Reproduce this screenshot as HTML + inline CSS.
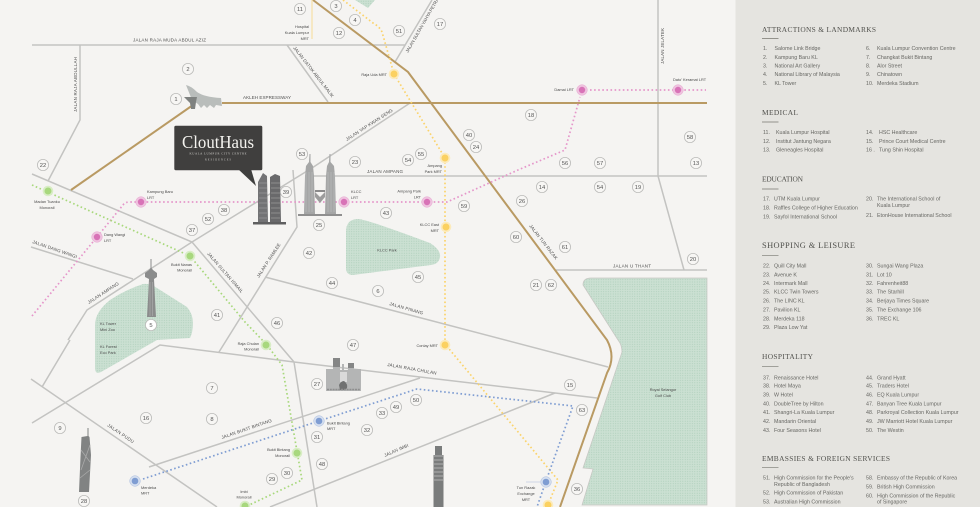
<!DOCTYPE html>
<html lang="en"><head><meta charset="utf-8"><title>CloutHaus Location Map</title>
<style>
html,body{margin:0;padding:0;width:980px;height:507px;overflow:hidden;background:#f5f4f2}
svg{display:block}
.m text{font-family:"Liberation Sans",sans-serif}
.r{fill:none;stroke:#c3c3c1;stroke-width:1.5}
.g{fill:none;stroke:#b99a63;stroke-width:2}
.d{fill:none;stroke-width:1.7;stroke-dasharray:1.6 2.5}
.n circle{fill:#f7f6f4;stroke:#bcbcba;stroke-width:.8;r:5.600px}
.n text{font-size:5.800px;fill:#555;text-anchor:middle}
.l{font-size:3.900px;fill:#4a4a4a}
.rl{font-size:4.500px;fill:#4e4e4e}
.e{text-anchor:end}.c{text-anchor:middle}
.s text{font-family:"Liberation Sans",sans-serif;font-size:5.300px;fill:#676763}
.s .h{font-family:"Liberation Serif",serif;font-size:7.400px;fill:#50504c}
.s line{stroke:#77776f;stroke-width:.7}
</style></head><body>
<svg class="m" width="980" height="507" viewBox="0 0 980 507" xmlns="http://www.w3.org/2000/svg">
<defs><pattern id="p" width="2.400" height="2.400" patternUnits="userSpaceOnUse"><rect width="2.400" height="2.400" fill="#cbe0d2"/><circle cx="1.200" cy="1.200" r=".48" fill="#a4c9b3"/></pattern></defs>
<rect width="980" height="507" fill="#f5f4f2"/>
<!-- parks -->
<path d="M355 0L368 8L375 0Z" fill="url(#p)"/>
<path d="M95 325Q95 312 110 300Q125 290 143 284Q150 283 157 288L187 307Q193 314 193 323Q193 332 190 338L157 340L101 372Q95 375 95 368Z" fill="url(#p)"/>
<path d="M346 232Q346 219 358 219Q366 219 430 243Q441 250 440 257Q439 264 431 265L353 275Q346 275 346 268Z" fill="url(#p)"/>
<path d="M583 285Q583 278 591 278L707 278L707 505L582 505L593 469L583 468L622 352Q622 345 618 340Z" fill="url(#p)" stroke="#c6c6c2" stroke-width=".7"/>
<!-- roads -->
<path class="r" d="M32 45H405M80 45V120L48 181M32 174L192 242L294 362L317 507M68 340L87 310L192 242L312 168L410 103M70 340L42 387M31 379L217 507M31 247L133 279M293 170L297 227L219 352M32 423L160 345L294 362L597 398M265 277L608 367M149 467L420 378M270 507L555 393M305 176H707M658 0V176L684 270M556 270H707M287 45L328 102M395 62L432 0"/>
<!-- gold -->
<path class="g" d="M222 103H707M71 190L193 105M313 0L408 72L607 340Q616 357 607 373L560 507"/>
<path d="M312 0V39" stroke="#f7dc97" stroke-width="1" fill="none"/>
<!-- dotted -->
<path class="d" stroke="#fbd36b" d="M343 0L373 23Q380 27 382 32L394 74L445 158V344L558 480L548 505"/>
<path class="d" stroke="#e596ca" d="M32 316L97 237L123 205Q125 202 130 202H447L518 170L565 150L580 97M590 90H706"/>
<path class="d" stroke="#a8d87c" d="M32 185L190 256L245 322L267 345L282 365L302 480L245 507"/>
<path class="d" stroke="#7f9dd2" d="M143 479L319 421L417 389L573 406L546 481L537 507"/>
<path d="M526 482H540" stroke="#c5cfe2" stroke-width=".8"/>
<!-- Salome -->
<path d="M186 85Q191 86 197 92Q204 97 221 98L222 106L216 105L214 108L210 105L207 108L204 105L201 108L198 104L192 100Z" fill="#b9bdbb"/>
<path d="M184 97H197L196 102L195 109H191L190 103Z" fill="#7f8280"/>
<!-- Twin towers near logo -->
<path d="M258 182L263 173L267 176L268 222H258Z" fill="#737375"/><path d="M270 177L275 174L280 176L281 222H270Z" fill="#69696b"/>
<path d="M253 222H286V224.500H253Z" fill="#5f5f60"/>
<path d="M259 183H267M259 188H267M259 193H267M259 198H267M259 203H267M259 208H267M259 213H267M259 218H267M271 183H280M271 188H280M271 193H280M271 198H280M271 203H280M271 208H280M271 213H280M271 218H280" stroke="#8d8d8e" stroke-width=".9"/>
<!-- Petronas -->
<path d="M309.500 154H310.500V162L313 166L314 176L315 214H304L305 176L306 166L309 162ZM329.500 154H330.500V162L334 166L335 176L336 214H325L326 176L327 166L329 162Z" fill="#a5a6a6"/>
<rect x="315" y="190" width="10" height="2" fill="#8a8a8a"/><path d="M315 192L320 197L325 192V197L320 203L315 197Z" fill="#9c9c9c"/>
<rect x="298" y="214" width="44" height="2" fill="#8f8f8f"/>
<path d="M306 172V212M309 172V212M312 172V212M328 172V212M331 172V212M334 172V212" stroke="#c3c3c3" stroke-width=".5"/>
<!-- KL Tower -->
<path d="M150.500 259H151.500V268L153 270L157 273V277L154 279L155 299L156 317H147L148 299L149 279L145 277V273L149 270L150.500 268Z" fill="#8b8c8c"/>
<path d="M150 282V316M152.500 282V316" stroke="#b7b7b7" stroke-width=".5"/>
<!-- Merdeka 118 -->
<path d="M87.500 428H88.500V436L89.500 437L91 455L89 492H79L80.500 457L81.500 437L87.500 436Z" fill="#818383"/>
<path d="M81 450L90 462M90 445L81 470M80 478L90 470" stroke="#aaa" stroke-width=".8"/>
<!-- Exchange 106 -->
<path d="M435 446H442V455H443.500V507H433.500V455H435Z" fill="#7a7c7c"/><path d="M434 456H443M434 460H443M434 464H443M434 468H443M434 472H443M434 476H443M434 480H443" stroke="#b0b0b0" stroke-width="1"/>
<!-- stadium -->
<path d="M326 369H333V358H340V370H342V364H344V370H348V363H354V369H361V391H326Z" fill="#b4b5b5"/>
<path d="M333 358H340V367H333ZM348 363H354V368H348Z" fill="#858686"/>
<rect x="340" y="372" width="7" height="10" fill="#dadada"/><path d="M339 385Q341 381 344 381Q348 384 347 388L345 390H340Z" fill="#707171"/>
<path d="M327 389.500H360" stroke="#8e8e8e" stroke-width="1.500" stroke-dasharray="2 .8"/>
<!-- logo -->
<path d="M238 169L256 186L251 169Z" fill="#3f3f3e"/>
<rect x="174.300" y="125.700" width="88" height="44.500" rx="1.500" fill="#403f3e"/>
<text x="182" y="148" font-size="17.500" textLength="72" lengthAdjust="spacingAndGlyphs" fill="#f4f3ef" style="font-family:'Liberation Serif',serif">CloutHaus</text>
<text x="218" y="154.500" class="c" font-size="3" textLength="57" fill="#d5d4d0" style="font-family:'Liberation Serif',serif">KUALA LUMPUR CITY CENTRE</text>
<text x="218" y="160.700" class="c" font-size="2.600" textLength="26" fill="#d5d4d0" style="font-family:'Liberation Serif',serif">RESIDENCES</text>
<!-- stations -->
<g fill="#efc3df" stroke="#e7a7d1" stroke-width=".5"><circle cx="141" cy="202" r="5.300"/><circle cx="97" cy="237" r="5.300"/><circle cx="344" cy="202" r="5.300"/><circle cx="427" cy="202" r="5.300"/><circle cx="582" cy="90" r="5.300"/><circle cx="678" cy="90" r="5.300"/></g>
<g fill="#d873b7"><circle cx="141" cy="202" r="3.200"/><circle cx="97" cy="237" r="3.200"/><circle cx="344" cy="202" r="3.200"/><circle cx="427" cy="202" r="3.200"/><circle cx="582" cy="90" r="3.200"/><circle cx="678" cy="90" r="3.200"/></g>
<g fill="#d9edc6"><circle cx="48" cy="191" r="5.300"/><circle cx="190" cy="256" r="5.300"/><circle cx="266" cy="345" r="5.300"/><circle cx="297" cy="453" r="5.300"/><circle cx="245" cy="506" r="5.300"/></g>
<g fill="#a8d87e"><circle cx="48" cy="191" r="3.500"/><circle cx="190" cy="256" r="3.500"/><circle cx="266" cy="345" r="3.500"/><circle cx="297" cy="453" r="3.500"/><circle cx="245" cy="506" r="3.500"/></g>
<g fill="#fcebbc"><circle cx="394" cy="74" r="5.300"/><circle cx="445" cy="158" r="5.300"/><circle cx="446" cy="227" r="5.300"/><circle cx="445" cy="345" r="5.300"/><circle cx="548" cy="505" r="5.300"/></g>
<g fill="#fbd161"><circle cx="394" cy="74" r="3.500"/><circle cx="445" cy="158" r="3.500"/><circle cx="446" cy="227" r="3.500"/><circle cx="445" cy="345" r="3.500"/><circle cx="548" cy="505" r="3.500"/></g>
<g fill="#d5dfef" stroke="#a9bcdf" stroke-width=".5"><circle cx="135" cy="481" r="5.300"/><circle cx="319" cy="421" r="5.300"/><circle cx="546" cy="482" r="5.300"/></g>
<g fill="#7f9dd2"><circle cx="135" cy="481" r="3.300"/><circle cx="319" cy="421" r="3.300"/><circle cx="546" cy="482" r="3.300"/></g>
<!-- numbers -->
<g class="n">
<g><circle cx="188" cy="69"/><text x="188" y="71">2</text></g>
<g><circle cx="176" cy="99"/><text x="176" y="101">1</text></g>
<g><circle cx="43" cy="165"/><text x="43" y="167">22</text></g>
<g><circle cx="300" cy="9"/><text x="300" y="11">11</text></g>
<g><circle cx="336" cy="6"/><text x="336" y="8">3</text></g>
<g><circle cx="355" cy="20"/><text x="355" y="22">4</text></g>
<g><circle cx="339" cy="33"/><text x="339" y="35">12</text></g>
<g><circle cx="399" cy="31"/><text x="399" y="33">51</text></g>
<g><circle cx="440" cy="24"/><text x="440" y="26">17</text></g>
<g><circle cx="302" cy="154"/><text x="302" y="156">53</text></g>
<g><circle cx="355" cy="162"/><text x="355" y="164">23</text></g>
<g><circle cx="408" cy="160"/><text x="408" y="162">54</text></g>
<g><circle cx="421" cy="154"/><text x="421" y="156">55</text></g>
<g><circle cx="469" cy="135"/><text x="469" y="137">40</text></g>
<g><circle cx="476" cy="147"/><text x="476" y="149">24</text></g>
<g><circle cx="531" cy="115"/><text x="531" y="117">18</text></g>
<g><circle cx="690" cy="137"/><text x="690" y="139">58</text></g>
<g><circle cx="565" cy="163"/><text x="565" y="165">56</text></g>
<g><circle cx="600" cy="163"/><text x="600" y="165">57</text></g>
<g><circle cx="696" cy="163"/><text x="696" y="165">13</text></g>
<g><circle cx="224" cy="210"/><text x="224" y="212">38</text></g>
<g><circle cx="208" cy="219"/><text x="208" y="221">52</text></g>
<g><circle cx="192" cy="230"/><text x="192" y="232">37</text></g>
<g><circle cx="217" cy="315"/><text x="217" y="317">41</text></g>
<g><circle cx="151" cy="325" style="fill:#fff"/><text x="151" y="327">5</text></g>
<g><circle cx="286" cy="192"/><text x="286" y="194">39</text></g>
<g><circle cx="319" cy="225"/><text x="319" y="227">25</text></g>
<g><circle cx="386" cy="213"/><text x="386" y="215">43</text></g>
<g><circle cx="464" cy="206"/><text x="464" y="208">59</text></g>
<g><circle cx="309" cy="253"/><text x="309" y="255">42</text></g>
<g><circle cx="332" cy="283"/><text x="332" y="285">44</text></g>
<g><circle cx="378" cy="291"/><text x="378" y="293">6</text></g>
<g><circle cx="418" cy="277"/><text x="418" y="279">45</text></g>
<g><circle cx="277" cy="323"/><text x="277" y="325">46</text></g>
<g><circle cx="542" cy="187"/><text x="542" y="189">14</text></g>
<g><circle cx="522" cy="201"/><text x="522" y="203">26</text></g>
<g><circle cx="600" cy="187"/><text x="600" y="189">54</text></g>
<g><circle cx="638" cy="187"/><text x="638" y="189">19</text></g>
<g><circle cx="516" cy="237"/><text x="516" y="239">60</text></g>
<g><circle cx="565" cy="247"/><text x="565" y="249">61</text></g>
<g><circle cx="693" cy="259"/><text x="693" y="261">20</text></g>
<g><circle cx="536" cy="285"/><text x="536" y="287">21</text></g>
<g><circle cx="551" cy="285"/><text x="551" y="287">62</text></g>
<g><circle cx="212" cy="388"/><text x="212" y="390">7</text></g>
<g><circle cx="146" cy="418"/><text x="146" y="420">16</text></g>
<g><circle cx="212" cy="419"/><text x="212" y="421">8</text></g>
<g><circle cx="60" cy="428"/><text x="60" y="430">9</text></g>
<g><circle cx="84" cy="501"/><text x="84" y="503">28</text></g>
<g><circle cx="353" cy="345"/><text x="353" y="347">47</text></g>
<g><circle cx="317" cy="384"/><text x="317" y="386">27</text></g>
<g><circle cx="382" cy="413"/><text x="382" y="415">33</text></g>
<g><circle cx="396" cy="407"/><text x="396" y="409">49</text></g>
<g><circle cx="416" cy="400"/><text x="416" y="402">50</text></g>
<g><circle cx="367" cy="430"/><text x="367" y="432">32</text></g>
<g><circle cx="317" cy="437"/><text x="317" y="439">31</text></g>
<g><circle cx="322" cy="464"/><text x="322" y="466">48</text></g>
<g><circle cx="272" cy="479"/><text x="272" y="481">29</text></g>
<g><circle cx="287" cy="473"/><text x="287" y="475">30</text></g>
<g><circle cx="570" cy="385"/><text x="570" y="387">15</text></g>
<g><circle cx="582" cy="410"/><text x="582" y="412">63</text></g>
<g><circle cx="577" cy="489"/><text x="577" y="491">36</text></g>
</g>
<!-- road labels -->
<g class="rl">
<text x="133" y="41.500" textLength="73">JALAN RAJA MUDA ABDUL AZIZ</text>
<text transform="translate(77,112) rotate(-90)" textLength="55">JALAN RAJA ABDULLAH</text>
<text x="243" y="99" textLength="48">AKLEH EXPRESSWAY</text>
<text transform="translate(293,48) rotate(52)" textLength="63">JALAN DATOK ABDUL MALIK</text>
<text transform="translate(408,53) rotate(-60)" textLength="62">JALAN SULTAN YAHYA PETRA</text>
<text transform="translate(347,141) rotate(-33)" textLength="55">JALAN YAP KWAN SENG</text>
<text x="367" y="173" textLength="36">JALAN AMPANG</text>
<text transform="translate(664,64) rotate(-90)" textLength="36">JALAN JELATEK</text>
<text transform="translate(32,243) rotate(19)" textLength="47">JALAN DANG WANGI</text>
<text transform="translate(89,304) rotate(-33)" textLength="36">JALAN AMPANG</text>
<text transform="translate(207,254) rotate(49)" textLength="52">JALAN SULTAN ISMAIL</text>
<text transform="translate(259,278) rotate(-57)" textLength="40">JALAN P. RAMLEE</text>
<text transform="translate(389,305) rotate(16)" textLength="35">JALAN PINANG</text>
<text transform="translate(529,226) rotate(52)" textLength="43">JALAN TUN RAZAK</text>
<text x="613" y="267.500" textLength="38">JALAN U THANT</text>
<text transform="translate(387,366) rotate(10)" textLength="50">JALAN RAJA CHULAN</text>
<text transform="translate(222,439) rotate(-19)" textLength="53">JALAN BUKIT BINTANG</text>
<text transform="translate(385,457) rotate(-24)" textLength="26">JALAN IMBI</text>
<text transform="translate(107,426) rotate(34)" textLength="31">JALAN PUDU</text>
</g>
<!-- station labels -->
<g class="l">
<text x="309" y="28" class="e">Hospital</text><text x="309" y="34" class="e">Kuala Lumpur</text><text x="309" y="40" class="e">MRT</text>
<text x="387" y="76" class="e">Raja Uda MRT</text>
<text x="442" y="167" class="e">Ampang</text><text x="442" y="173" class="e">Park MRT</text>
<text x="574" y="91" class="e">Damai LRT</text>
<text x="673" y="81">Dato' Keramat LRT</text>
<text x="351" y="193">KLCC</text><text x="351" y="199">LRT</text>
<text x="421" y="192.500" class="e">Ampang Park</text><text x="421" y="198.500" class="e">LRT</text>
<text x="439" y="226" class="e">KLCC East</text><text x="439" y="232" class="e">MRT</text>
<text x="147" y="193">Kampung Baru</text><text x="147" y="199">LRT</text>
<text x="104" y="236">Dang Wangi</text><text x="104" y="242">LRT</text>
<text x="47" y="203" class="c">Madan Tuanku</text><text x="47" y="209" class="c">Monorail</text>
<text x="192" y="266" class="e">Bukit Nanas</text><text x="192" y="271.500" class="e">Monorail</text>
<text x="259" y="345" class="e">Raja Chulan</text><text x="259" y="350.500" class="e">Monorail</text>
<text x="438" y="347" class="e">Conlay MRT</text>
<text x="290" y="451" class="e">Bukit Bintang</text><text x="290" y="457" class="e">Monorail</text>
<text x="244" y="493" class="c">Imbi</text><text x="244" y="498.500" class="c">Monorail</text>
<text x="327" y="424.500">Bukit Bintang</text><text x="327" y="430">MRT</text>
<text x="141" y="489">Merdeka</text><text x="141" y="494.500">MRT</text>
<text x="526" y="489" class="c">Tun Razak</text><text x="526" y="495" class="c">Exchange</text><text x="526" y="501" class="c">MRT</text>
<text x="663" y="391" class="c">Royal Selangor</text><text x="663" y="397" class="c">Golf Club</text>
<text x="387" y="251.500" class="c">KLCC Park</text>
<text x="100" y="325">KL Tower</text><text x="100" y="331">Mini Zoo</text>
<text x="100" y="348">KL Forest</text><text x="100" y="354">Eco Park</text>
</g>
<!-- sidebar -->
<rect x="735.500" y="0" width="245" height="507" fill="#e5e4e0"/>
<g class="s">
<text class="h" x="762" y="32" textLength="114">ATTRACTIONS &amp; LANDMARKS</text><line x1="762" x2="778.500" y1="38.500" y2="38.500"/>
<text x="763" y="50">1.</text><text x="774.500" y="50">Salome Link Bridge</text><text x="866" y="50">6.</text><text x="877" y="50">Kuala Lumpur Convention Centre</text>
<text x="763" y="59">2.</text><text x="774.500" y="59">Kampung Baru KL</text><text x="866" y="59">7.</text><text x="877" y="59">Changkat Bukit Bintang</text>
<text x="763" y="67.500">3.</text><text x="774.500" y="67.500">National Art Gallery</text><text x="866" y="67.500">8.</text><text x="877" y="67.500">Alor Street</text>
<text x="763" y="76">4.</text><text x="774.500" y="76">National Library of Malaysia</text><text x="866" y="76">9.</text><text x="877" y="76">Chinatown</text>
<text x="763" y="85">5.</text><text x="774.500" y="85">KL Tower</text><text x="866" y="85">10.</text><text x="877" y="85">Merdeka Stadium</text>

<text class="h" x="762" y="115" textLength="36">MEDICAL</text><line x1="762" x2="778.500" y1="122" y2="122"/>
<text x="763" y="134">11.</text><text x="776" y="134">Kuala Lumpur Hospital</text><text x="866" y="134">14.</text><text x="879" y="134">HSC Healthcare</text>
<text x="763" y="143">12.</text><text x="776" y="143">Institut Jantung Negara</text><text x="866" y="143">15.</text><text x="879" y="143">Prince Court Medical Centre</text>
<text x="763" y="151.500">13.</text><text x="776" y="151.500">Gleneagles Hospital</text><text x="866" y="151.500">16 .</text><text x="879" y="151.500">Tung Shin Hospital</text>

<text class="h" x="762" y="181.500" textLength="41">EDUCATION</text><line x1="762" x2="778.500" y1="189" y2="189"/>
<text x="763" y="200.500">17.</text><text x="774" y="200.500">UTM Kuala Lumpur</text><text x="866" y="200.500">20.</text><text x="877" y="200.500">The International School of</text>
<text x="877" y="207">Kuala Lumpur</text>
<text x="763" y="209.500">18.</text><text x="774" y="209.500">Raffles College of Higher Education</text>
<text x="763" y="218.500">19.</text><text x="774" y="218.500">Sayfol International School</text><text x="866" y="217">21.</text><text x="877" y="217">EtonHouse International School</text>

<text class="h" x="762" y="248" textLength="93" style="font-size:8.400px">SHOPPING &amp; LEISURE</text><line x1="762" x2="778.500" y1="255.700" y2="255.700"/>
<text x="763" y="267.300">22.</text><text x="774" y="267.300">Quill City Mall</text><text x="866" y="267.300">30.</text><text x="877" y="267.300">Sungai Wang Plaza</text>
<text x="763" y="276.300">23.</text><text x="774" y="276.300">Avenue K</text><text x="866" y="276.300">31.</text><text x="877" y="276.300">Lot 10</text>
<text x="763" y="285">24.</text><text x="774" y="285">Intermark Mall</text><text x="866" y="285">32.</text><text x="877" y="285">Fahrenheit88</text>
<text x="763" y="293.700">25.</text><text x="774" y="293.700">KLCC Twin Towers</text><text x="866" y="293.700">33.</text><text x="877" y="293.700">The Starhill</text>
<text x="763" y="302.300">26.</text><text x="774" y="302.300">The LINC KL</text><text x="866" y="302.300">34.</text><text x="877" y="302.300">Berjaya Times Square</text>
<text x="763" y="311.300">27.</text><text x="774" y="311.300">Pavilion KL</text><text x="866" y="311.300">35.</text><text x="877" y="311.300">The Exchange 106</text>
<text x="763" y="320.300">28.</text><text x="774" y="320.300">Merdeka 118</text><text x="866" y="320.300">36.</text><text x="877" y="320.300">TREC KL</text>
<text x="763" y="329">29.</text><text x="774" y="329">Plaza Low Yat</text>

<text class="h" x="762" y="359" textLength="51">HOSPITALITY</text><line x1="762" x2="778.500" y1="366.300" y2="366.300"/>
<text x="763" y="379.300">37.</text><text x="774" y="379.300">Renaissance Hotel</text><text x="866" y="379.300">44.</text><text x="877" y="379.300">Grand Hyatt</text>
<text x="763" y="387.700">38.</text><text x="774" y="387.700">Hotel Maya</text><text x="866" y="387.700">45.</text><text x="877" y="387.700">Traders Hotel</text>
<text x="763" y="396.300">39.</text><text x="774" y="396.300">W Hotel</text><text x="866" y="396.300">46.</text><text x="877" y="396.300">EQ Kuala Lumpur</text>
<text x="763" y="405.300">40.</text><text x="774" y="405.300">DoubleTree by Hilton</text><text x="866" y="405.300">47.</text><text x="877" y="405.300">Banyan Tree Kuala Lumpur</text>
<text x="763" y="414">41.</text><text x="774" y="414">Shangri-La Kuala Lumpur</text><text x="866" y="414">48.</text><text x="877" y="414">Parkroyal Collection Kuala Lumpur</text>
<text x="763" y="423">42.</text><text x="774" y="423">Mandarin Oriental</text><text x="866" y="423">49.</text><text x="877" y="423">JW Marriott Hotel Kuala Lumpur</text>
<text x="763" y="432">43.</text><text x="774" y="432">Four Seasons Hotel</text><text x="866" y="432">50.</text><text x="877" y="432">The Westin</text>

<text class="h" x="762" y="461" textLength="128">EMBASSIES &amp; FOREIGN SERVICES</text><line x1="762" x2="778.500" y1="467.700" y2="467.700"/>
<text x="763" y="479.300">51.</text><text x="774" y="479.300">High Commission for the People's</text><text x="866" y="479.300">58.</text><text x="877" y="479.300">Embassy of the Republic of Korea</text>
<text x="774" y="486">Republic of Bangladesh</text><text x="866" y="488.300">59.</text><text x="877" y="488.300">British High Commission</text>
<text x="763" y="494.300">52.</text><text x="774" y="494.300">High Commission of Pakistan</text><text x="866" y="497.300">60.</text><text x="877" y="497.300">High Commission of the Republic</text>
<text x="763" y="503.300">53.</text><text x="774" y="503.300">Australian High Commission</text><text x="877" y="503.300">of Singapore</text>
</g>
</svg>
</body></html>
